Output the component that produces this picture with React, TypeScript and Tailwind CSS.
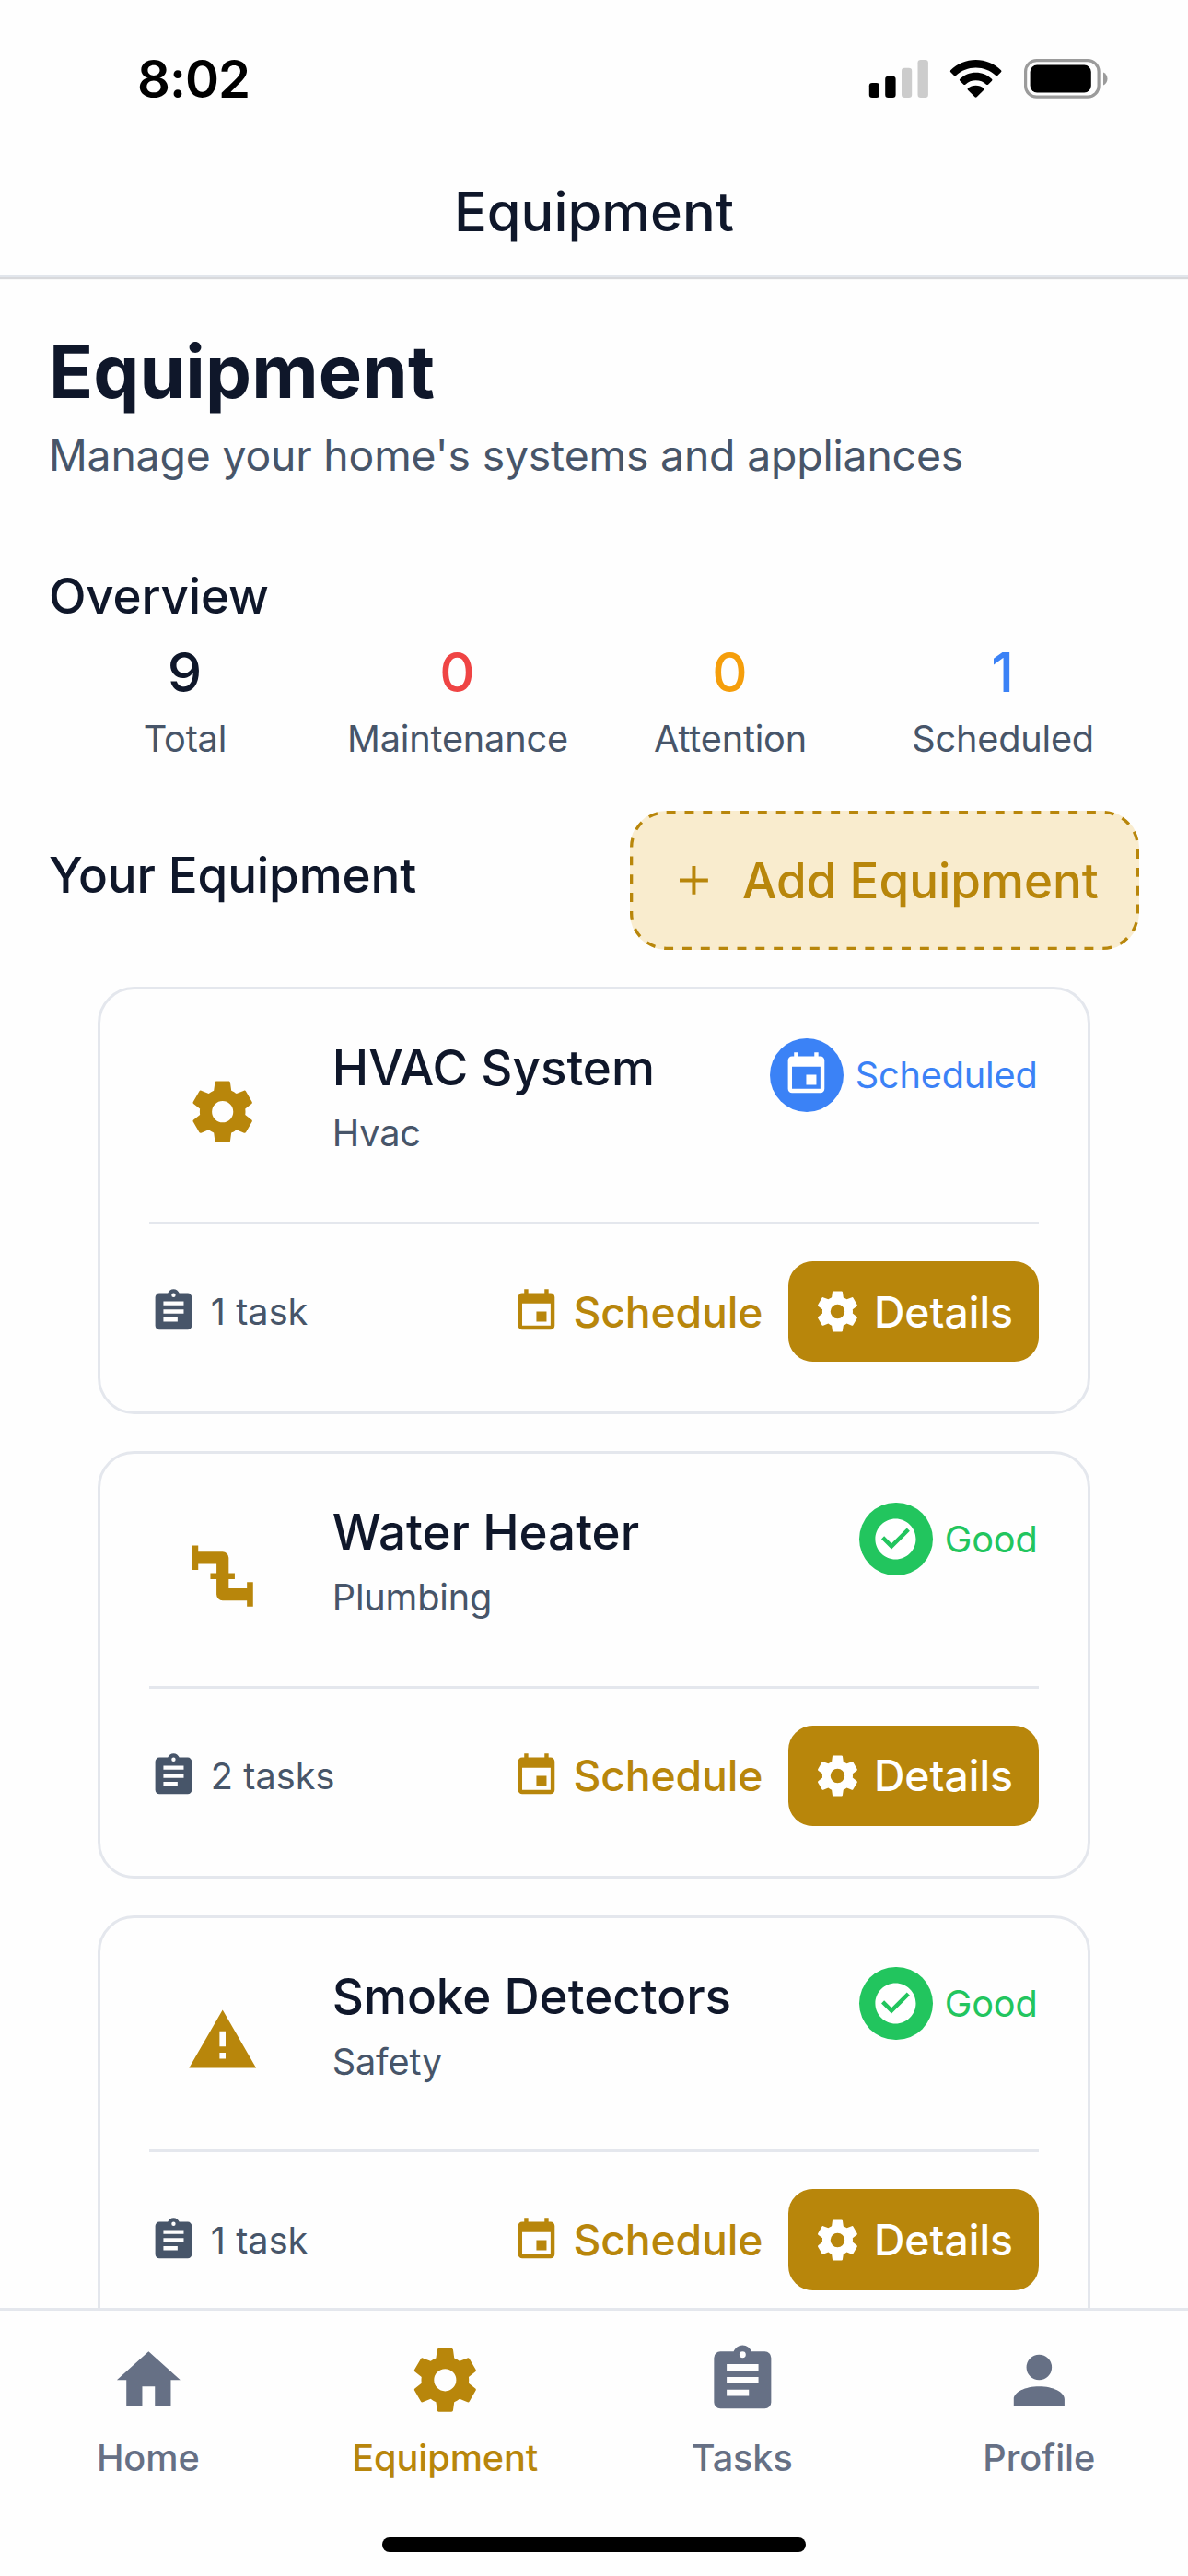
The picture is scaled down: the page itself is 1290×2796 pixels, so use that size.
import React from "react";

const ICONS = {
  cog: "M12,15.5A3.5,3.5 0 0,1 8.5,12A3.5,3.5 0 0,1 12,8.5A3.5,3.5 0 0,1 15.5,12A3.5,3.5 0 0,1 12,15.5M19.43,12.97C19.47,12.65 19.5,12.33 19.5,12C19.5,11.67 19.47,11.34 19.43,11L21.54,9.37C21.73,9.22 21.78,8.95 21.66,8.73L19.66,5.27C19.54,5.05 19.27,4.96 19.05,5.05L16.56,6.05C16.04,5.66 15.5,5.32 14.87,5.07L14.5,2.42C14.46,2.18 14.25,2 14,2H10C9.75,2 9.54,2.18 9.5,2.42L9.13,5.07C8.5,5.32 7.96,5.66 7.44,6.05L4.95,5.05C4.73,4.96 4.46,5.05 4.34,5.27L2.34,8.73C2.21,8.95 2.27,9.22 2.46,9.37L4.57,11C4.53,11.34 4.5,11.67 4.5,12C4.5,12.33 4.53,12.65 4.57,12.97L2.46,14.63C2.27,14.78 2.21,15.05 2.34,15.27L4.34,18.73C4.46,18.95 4.73,19.03 4.95,18.95L7.44,17.94C7.96,18.34 8.5,18.68 9.13,18.93L9.5,21.58C9.54,21.82 9.75,22 10,22H14C14.25,22 14.46,21.82 14.5,21.58L14.87,18.93C15.5,18.67 16.04,18.34 16.56,17.94L19.05,18.95C19.27,19.03 19.54,18.95 19.66,18.73L21.66,15.27C21.78,15.05 21.73,14.78 21.54,14.63L19.43,12.97Z",
  clipboard: "M17,9H7V7H17M17,13H7V11H17M14,17H7V15H14M12,3A1,1 0 0,1 13,4A1,1 0 0,1 12,5A1,1 0 0,1 11,4A1,1 0 0,1 12,3M19,3H14.82C14.4,1.84 13.3,1 12,1C10.7,1 9.6,1.84 9.18,3H5A2,2 0 0,0 3,5V19A2,2 0 0,0 5,21H19A2,2 0 0,0 21,19V5A2,2 0 0,0 19,3Z",
  calendar: "M19,19H5V8H19M16,1V3H8V1H6V3H5C3.89,3 3,3.89 3,5V19A2,2 0 0,0 5,21H19A2,2 0 0,0 21,19V5C21,3.89 20.1,3 19,3H18V1M17,12H12V17H17V12Z",
  check: "M12 2C6.5 2 2 6.5 2 12S6.5 22 12 22 22 17.5 22 12 17.5 2 12 2M10 17L5 12L6.41 10.59L10 14.17L17.59 6.58L19 8L10 17Z",
  home: "M10,20V14H14V20H19V12H22L12,3L2,12H5V20H10Z",
  account: "M12,4A4,4 0 0,1 16,8A4,4 0 0,1 12,12A4,4 0 0,1 8,8A4,4 0 0,1 12,4M12,14C16.42,14 20,15.79 20,18V20H4V18C4,15.79 7.58,14 12,14Z",
  alert: "M13 14H11V9H13M13 18H11V16H13M1 21H23L12 2L1 21Z",
  pipe: "M22,14H20V16H14V13H16V11H14V6A2,2 0 0,0 12,4H4V2H2V10H4V8H10V11H8V13H10V18A2,2 0 0,0 12,20H20V22H22",
  plus: "M19,12.9H12.9V19H11.1V12.9H5V11.1H11.1V5H12.9V11.1H19V12.9Z",
};
type IconName = keyof typeof ICONS;

function Icon({ name, className }: { name: IconName; className: string }) {
  return (
    <svg viewBox="0 0 24 24" fill="currentColor" fillRule="evenodd" className={`block shrink-0 ${className}`}>
      <path d={ICONS[name]} />
    </svg>
  );
}

function StatusBar() {
  return (
    <div className="flex h-[172px] shrink-0 items-start justify-between pl-[149px] pr-[87px] pt-[52px] text-black">
      <div className="text-[56.2px] font-semibold leading-[68px] tracking-[-1px]">8:02</div>
      <svg className="mt-[12px] block h-[44px] w-[260px]" viewBox="943 64 260 44">
        <rect x="943.8" y="90" width="11.2" height="16" rx="3.3" />
        <rect x="961.2" y="82.7" width="11.4" height="23.3" rx="3.3" />
        <rect x="979" y="73.8" width="11.2" height="32.2" rx="3.3" fill="#cccccc" />
        <rect x="996.5" y="65" width="11.4" height="41" rx="3.3" fill="#cccccc" />
        <path d="M1059.6 65 C1070 65 1080 69 1087 76.2 Q1088 77.2 1087 78.2 L1083.2 82 Q1082.3 82.9 1081.3 82 C1075 76.5 1068 73.6 1059.6 73.6 C1051.3 73.6 1044.2 76.5 1038 82 Q1037 82.9 1036 82 L1032.2 78.2 Q1031.2 77.2 1032.2 76.2 C1039.2 69 1049.2 65 1059.6 65Z" />
        <path d="M1059.6 78.7 C1066.2 78.7 1072.2 81.2 1077 85.7 Q1078 86.7 1077 87.7 L1073 91.7 Q1072 92.5 1071 91.7 C1067.8 88.8 1064 87.3 1059.6 87.3 C1055.3 87.3 1051.5 88.8 1048.3 91.7 Q1047.3 92.5 1046.3 91.7 L1042.3 87.7 Q1041.3 86.7 1042.3 85.7 C1047 81.2 1053 78.7 1059.6 78.7Z" />
        <path d="M1059.6 92.8 C1062.9 92.8 1065.8 93.9 1068.2 95.8 Q1069.2 96.8 1068.2 97.8 L1060.6 105.3 Q1059.6 106.2 1058.6 105.3 L1051 97.8 Q1050 96.8 1051 95.8 C1053.4 93.9 1056.300 92.8 1059.6 92.8Z" />
        <rect x="1113.6" y="65.6" width="79.5" height="39.6" rx="12" fill="none" stroke="#9b9b9b" strokeWidth="3.2" />
        <rect x="1118.6" y="70.6" width="66.2" height="29.8" rx="7.5" />
        <path d="M1198 78.5 C1200.700 79.6 1202.500 82.3 1202.500 85.5 C1202.500 88.7 1200.700 91.4 1198 92.5Z" fill="#9b9b9b" />
      </svg>
    </div>
  );
}

const STATS = [
  { value: "9", label: "Total", color: "text-[#0f172a]" },
  { value: "0", label: "Maintenance", color: "text-[#ef4444]" },
  { value: "0", label: "Attention", color: "text-[#f59e0b]" },
  { value: "1", label: "Scheduled", color: "text-[#3b82f6]" },
];

type Item = { name: string; kind: string; icon: IconName; tasks: string; status: "Scheduled" | "Good" };
const ITEMS: Item[] = [
  { name: "HVAC System", kind: "Hvac", icon: "cog", tasks: "1 task", status: "Scheduled" },
  { name: "Water Heater", kind: "Plumbing", icon: "pipe", tasks: "2 tasks", status: "Good" },
  { name: "Smoke Detectors", kind: "Safety", icon: "alert", tasks: "1 task", status: "Good" },
];

function StatusBadge({ status }: { status: Item["status"] }) {
  const scheduled = status === "Scheduled";
  return (
    <div className={`flex h-[79.4px] items-center gap-[13.2px] pr-[1.5px] ${scheduled ? "text-[#3b82f6]" : "text-[#22c55e]"}`}>
      <div className={`flex size-[79.4px] items-center justify-center rounded-full ${scheduled ? "bg-[#3b82f6]" : "bg-[#22c55e]"}`}>
        <Icon name={scheduled ? "calendar" : "check"} className="size-[52.9px] text-white" />
      </div>
      <span className="pt-px text-[39.7px] leading-[53px] tracking-[-0.2px]">{status}</span>
    </div>
  );
}

function Card({ item }: { item: Item }) {
  return (
    <div className="h-[464.2px] shrink-0 rounded-[39.7px] border-[3px] border-[#e4e7ed] p-[53.2px]">
      <div className="flex h-[158.8px] items-start">
        <div className="flex size-[158.8px] shrink-0 items-center justify-center text-[#b8860b]">
          <Icon name={item.icon} className="size-[79.4px]" />
        </div>
        <div className="ml-[40px] flex-1">
          <div className="whitespace-nowrap text-[52.9px] font-medium leading-[65px] text-[#0f172a]">{item.name}</div>
          <div className="mt-[13.2px] text-[39.7px] leading-[50px] tracking-[-0.2px] text-[#475569]">{item.kind}</div>
        </div>
        <StatusBadge status={item.status} />
      </div>
      <div className="mt-[39.7px] flex items-center justify-between border-t-[3px] border-[#e4e7ed] pt-[40px]">
        <div className="flex items-center gap-[14px] text-[#475569]">
          <Icon name="clipboard" className="size-[52.9px]" />
          <span className="pt-[2px] text-[39.7px] leading-[53px]">{item.tasks}</span>
        </div>
        <div className="flex text-[46.3px] font-medium leading-[57px]">
          <div className="flex h-[109.8px] items-center gap-[13.2px] pl-[26.5px] pr-[28px] tracking-[-0.15px] text-[#b8860b]">
            <Icon name="calendar" className="size-[52.9px]" />
            <span className="pt-px">Schedule</span>
          </div>
          <div className="flex h-[109.8px] items-center gap-[13.2px] rounded-[26.5px] bg-[#b8860b] pl-[26.5px] pr-[28px] text-white">
            <Icon name="cog" className="size-[52.9px]" />
            <span className="pt-px">Details</span>
          </div>
        </div>
      </div>
    </div>
  );
}

const TABS: { label: string; icon: IconName }[] = [
  { label: "Home", icon: "home" },
  { label: "Equipment", icon: "cog" },
  { label: "Tasks", icon: "clipboard" },
  { label: "Profile", icon: "account" },
];

export default function App() {
  return (
    <div className="flex h-[2796px] w-[1290px] flex-col overflow-hidden bg-[#fefefe] font-['Inter',sans-serif] text-[#0f172a]">
      <StatusBar />
      <header className="flex h-[129px] shrink-0 items-center justify-center border-b-[3px] border-[#e2e6ec] pb-[12px] shadow-[0_2px_1px_#d8d9dc]">
        <div className="text-[59.5px] font-medium leading-[72px]">Equipment</div>
      </header>

      <main className="flex min-h-0 flex-1 flex-col overflow-hidden px-[52.9px] pt-[53.5px]">
        <h1 className="h-[96px] text-[79.4px] font-bold leading-[96px] tracking-[0.2px]">Equipment</h1>
        <p className="mt-[10px] h-[66px] whitespace-nowrap text-[46.3px] leading-[66px] tracking-[-0.15px] text-[#475569]">
          Manage your home's systems and appliances
        </p>
        <h2 className="mt-[87px] h-[66px] text-[52.9px] font-medium leading-[66px] tracking-[-0.15px]">Overview</h2>
        <div className="mt-[13px] grid shrink-0 grid-cols-4">
          {STATS.map((s) => (
            <div key={s.label} className="flex flex-col items-center">
              <div className={`h-[72px] pr-[1px] text-[59.5px] font-medium leading-[72px] ${s.color}`}>{s.value}</div>
              <div className="mt-[11.5px] h-[53px] text-[39.7px] leading-[53px] tracking-[-0.2px] text-[#475569]">{s.label}</div>
            </div>
          ))}
        </div>

        <div className="mt-[51px] flex h-[151px] shrink-0 justify-between">
          <h2 className="pt-[37px] text-[52.9px] font-medium leading-[66px] tracking-[-0.12px]">Your Equipment</h2>
          <div className="relative flex h-[151px] w-[553px] items-center rounded-[39.7px] bg-[#f9ecce] pl-[43px] text-[#b8860b]">
            <svg className="absolute inset-0 h-full w-full" viewBox="0 0 553 151" fill="none">
              <rect x="1.65" y="1.65" width="549.7" height="147.7" rx="38" stroke="#b8860b" strokeWidth="3.3" strokeDasharray="9.92 9.92" />
            </svg>
            <Icon name="plus" className="size-[52.9px]" />
            <span className="ml-[26px] whitespace-nowrap text-[52.9px] font-medium leading-[66px]">Add Equipment</span>
          </div>
        </div>

        <div className="mt-[40px] flex flex-col gap-[39.7px] px-[52.9px]">
          {ITEMS.map((item) => (
            <Card key={item.name} item={item} />
          ))}
        </div>
      </main>

      <footer className="flex h-[291.5px] shrink-0 flex-col items-center justify-between border-t-[3px] border-[#e4e7ed] bg-[#fefefe] pb-[26px]">
        <nav className="grid w-full grid-cols-4 pt-[34px]">
          {TABS.map((t) => (
            <div key={t.label} className={`flex flex-col items-center ${t.label === "Equipment" ? "text-[#b8860b]" : "text-[#667085]"}`}>
              <Icon name={t.icon} className="size-[82.7px]" />
              <span className="mt-[20px] pr-[1px] text-[39.7px] font-medium leading-[48px] tracking-[-0.1px]">{t.label}</span>
            </div>
          ))}
        </nav>
        <div className="h-[16.5px] w-[460px] rounded-full bg-black" />
      </footer>
    </div>
  );
}
